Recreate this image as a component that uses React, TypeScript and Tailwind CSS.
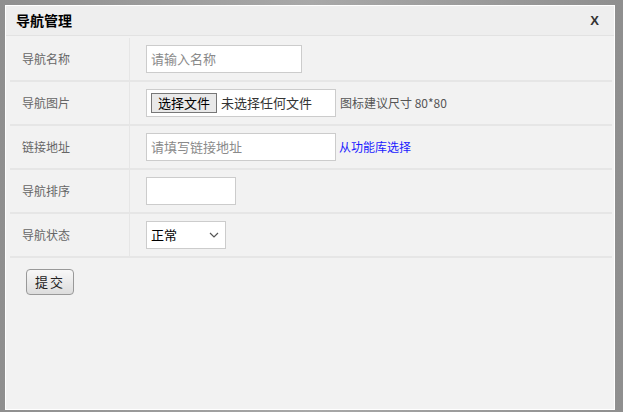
import React from "react";

const rows = ["导航名称", "导航图片", "链接地址", "导航排序", "导航状态"];

export default function App(): React.JSX.Element {
  return (
    <div
      className="w-[623px] h-[412px] overflow-hidden bg-gradient-to-r from-[#8f8f8f] via-[#a8a8a8] to-[#8f8f8f] pl-[5px] pt-[5px] pr-[8px] pb-[2px]"
      style={{ fontFamily: '"Noto Sans CJK SC", "Noto Sans", sans-serif' }}
    >
      <div className="h-full flex flex-col border border-white bg-[#f2f2f2]">
        <div className="h-[30px] flex items-center justify-between px-[10px] bg-[#eeeeee] border-b border-[#e2e2e2]">
          <span className="text-[14px] font-bold text-black">导航管理</span>
          <span className="text-[13px] font-bold text-[#333] mr-[5px]" style={{ fontFamily: '"Liberation Sans", sans-serif' }}>
            X
          </span>
        </div>
        <div className="pl-[4px] pr-[2px] pt-[2px]">
          {rows.map((label, i) => (
            <div key={label} className="flex h-[44px] border-b-2 border-[#e6e6e6]">
              <div className="w-[120px] shrink-0 border-r border-[#e6e6e6] pl-[12px] pt-[12px] text-[12px] text-[#666]">
                {label}
              </div>
              <div className="flex items-center pl-[16px] text-[12px]">
                {i === 0 && (
                  <div className="w-[156px] h-[28px] border border-[#cccccc] bg-white px-[4px] flex items-center text-[13px] text-[#8a8a8a]">
                    请输入名称
                  </div>
                )}
                {i === 1 && (
                  <>
                    <div className="w-[190px] h-[28px] border border-[#cccccc] bg-white flex items-center pl-[4px] text-[13px] text-[#333]">
                      <span className="h-[20px] px-[6px] flex items-center border border-[#777] bg-[#e9e9e9] text-[13px] text-black">
                        选择文件
                      </span>
                      <span className="ml-[4px]">未选择任何文件</span>
                    </div>
                    <span className="ml-[4px] text-[12px] text-[#555]">图标建议尺寸 80*80</span>
                  </>
                )}
                {i === 2 && (
                  <>
                    <div className="w-[190px] h-[28px] border border-[#cccccc] bg-white px-[4px] flex items-center text-[13px] text-[#8a8a8a]">
                      请填写链接地址
                    </div>
                    <span className="ml-[3px] text-[12px] text-[#1a1aff]">从功能库选择</span>
                  </>
                )}
                {i === 3 && <div className="w-[90px] h-[28px] border border-[#cccccc] bg-white" />}
                {i === 4 && (
                  <div className="w-[80px] h-[28px] border border-[#cccccc] bg-white pl-[4px] pr-[6px] flex items-center justify-between text-[13px] text-black">
                    <span>正常</span>
                    <svg width="10" height="6" viewBox="0 0 10 6" fill="none">
                      <path d="M1 1l4 4 4-4" stroke="#555" strokeWidth="1.2" />
                    </svg>
                  </div>
                )}
              </div>
            </div>
          ))}
          <div className="pl-[16px] pt-[10px]">
            <button className="h-[26px] px-[8px] rounded-[4px] border border-[#999] bg-gradient-to-b from-[#f8f8f8] to-[#dddddd] text-[13px] text-[#222] tracking-[2px]">
              提交
            </button>
          </div>
        </div>
      </div>
    </div>
  );
}
